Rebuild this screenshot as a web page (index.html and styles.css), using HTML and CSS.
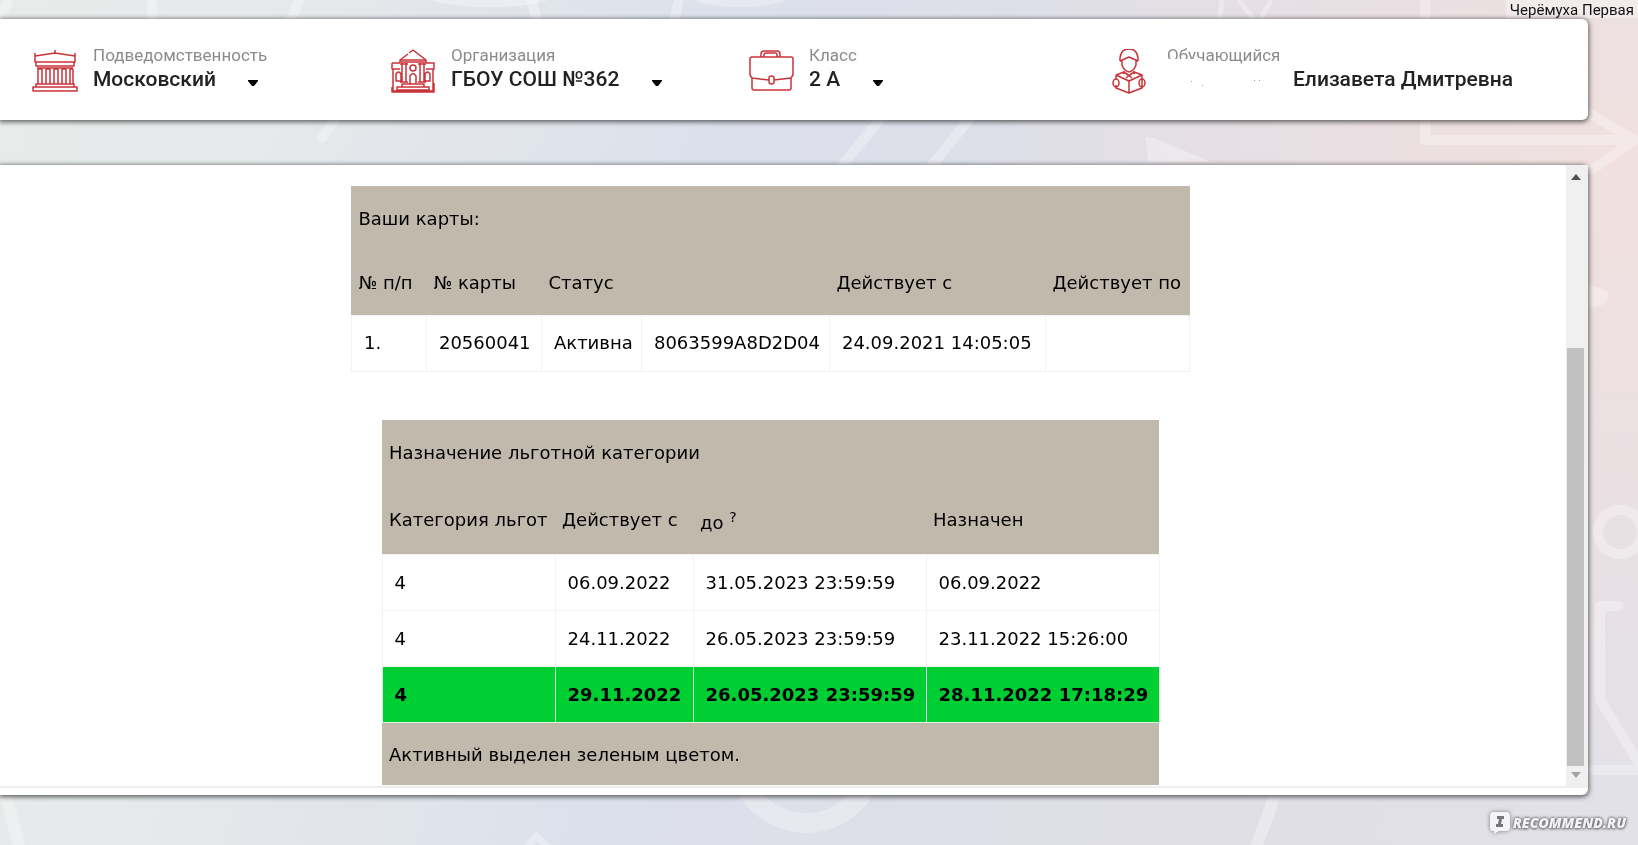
FILE: index.html
```html
<!DOCTYPE html>
<html lang="ru">
<head>
<meta charset="utf-8">
<meta name="viewport" content="width=device-width, initial-scale=1">
<title>Льготные категории</title>
<link rel="stylesheet" href="styles.css">
</head>
<body>
<svg class="backdrop" viewBox="0 0 1638 845" preserveAspectRatio="xMidYMid slice" aria-hidden="true">
  <g fill="none" stroke="#fff" stroke-opacity=".3" stroke-width="10" stroke-linecap="round" stroke-linejoin="round">
    <path d="M-4 20 8 4M152-5V30M286 30 302-5M322 138 350 100M530-5 540 30M672 30 680-5M840 168 886 112M930 168 975 112"/>
    <path d="M1425-5V140H1632M1592 115 1634 140 1592 170"/>
    <path d="M1218 30 1222 0M1240 2 1258 24 1270 2" stroke-width="5"/>
    <circle cx="1620" cy="532" r="22"/>
    <path d="M1618 606H1600V700L1640 765M1590 770H1640"/>
    <path d="M6 795 20 850M1255 850 1275 795" stroke-width="12"/>
    <path d="M524 850 536 836 552 850" stroke-width="7"/>
    <circle cx="806" cy="755" r="68" stroke-width="20"/>
  </g>
  <g fill="#fff" fill-opacity=".3">
    <ellipse cx="490" cy="-4" rx="62" ry="11"/>
    <ellipse cx="740" cy="-4" rx="50" ry="11"/>
    <path d="M1146 142Q1142 136 1154 138L1212 162H1148Z"/>
    <path d="M1586 285C1602 288 1612 290 1608 300 1604 306 1594 308 1586 308Z"/>
  </g>
</svg>

<div class="page">
  <div class="topline"><span class="author">Черёмуха Первая</span></div>

  <header class="filters">
    <div class="filter">
      <svg class="filter-icon" viewBox="0 0 46 46" aria-hidden="true">
        <path d="M3 13V7L23 4 43 7V13ZM23 4V1M3 7V4M43 7V4M4 13H42V17H4ZM6 17H40M5 19H41M6 20V35M10 20V35M14 20V35M18 20V35M22 20V35M26 20V35M30 20V35M34 20V35M38 20V35M41 20V35M6 20H10M14 20H18M22 20H26M30 20H34M38 20H41M4 35H42V38H4ZM1 38H45V42H1ZM8 38H11"/>
      </svg>
      <div class="filter-text">
        <label class="filter-label" for="district">Подведомственность</label>
        <div class="filter-row">
          <select class="filter-value" id="district"><option>Московский</option></select>
          <svg class="caret" viewBox="0 0 10 6" aria-hidden="true"><path d="M0 0H10V1L6 6H4L0 1Z"/></svg>
        </div>
      </div>
    </div>

    <div class="filter">
      <svg class="filter-icon" viewBox="0 0 46 46" aria-hidden="true">
        <path d="M10 11 18 5M19 4 23 1 36 11V13H10V11H36M2 14H10M36 14H44V20H36M2 14V20H10M3 20V42M43 20V42M2 42V38M44 34V42M12 14V33M16 14V33M30 14V33M34 14V33M10 15H18M28 15H36M10 33H18M28 33H36M20 35V27Q23 22 26 27V35M6 32V25Q8.500 21 11 25V32ZM35 32V25Q37.500 21 40 25V32ZM12 35H34V38H12ZM7 38H39V41H7ZM2 42H44V43H2Z"/>
        <circle cx="23" cy="19" r="3"/>
      </svg>
      <div class="filter-text">
        <label class="filter-label" for="school">Организация</label>
        <div class="filter-row">
          <select class="filter-value" id="school"><option>ГБОУ СОШ №362</option></select>
          <svg class="caret" viewBox="0 0 10 6" aria-hidden="true"><path d="M0 0H10V1L6 6H4L0 1Z"/></svg>
        </div>
      </div>
    </div>

    <div class="filter">
      <svg class="filter-icon" viewBox="0 0 46 46" aria-hidden="true">
        <path d="M3 8H43Q45 8 45 10V26L43 29 26 31M21 31 4 29 2 26V10Q2 8 4 8M4 29V39Q4 41 6 41H41Q43 41 43 39V29M13 8V5Q13 2 16 2H29Q32 2 32 5V8M16 8V6Q16 4 18 4H27Q29 4 29 6V8M21 29Q21 27 23.500 27T26 29V33Q26 35 23.500 35T21 33Z"/>
      </svg>
      <div class="filter-text">
        <label class="filter-label" for="grade">Класс</label>
        <div class="filter-row">
          <select class="filter-value" id="grade"><option>2 А</option></select>
          <svg class="caret" viewBox="0 0 10 6" aria-hidden="true"><path d="M0 0H10V1L6 6H4L0 1Z"/></svg>
        </div>
      </div>
    </div>

    <div class="filter">
      <svg class="filter-icon" viewBox="0 0 46 46" aria-hidden="true">
        <path d="M14 12V9Q15 0 23 0T32 9V12M14 12 23 8 32 12M16 12V16Q18 22 23 23 28 22 30 16V12M14 12H16M30 12H32M18 22V25M28 22V25M18 23 23 27 28 23M20 29 26 24M20 24 26 29M10 26 23 32 36 26V39L23 44 10 39V36M36 36V30M23 32V44M10 26 18 23M36 26 28 23M10 26V30"/>
        <ellipse cx="10" cy="34" rx="3" ry="4"/>
        <ellipse cx="36" cy="34" rx="3" ry="4"/>
      </svg>
      <div class="filter-text">
        <span class="filter-label filter-label-masked">Обучающийся</span>
        <div class="filter-row">
          <svg class="erased" viewBox="0 0 126 24" aria-hidden="true"><path d="M24 14h1v1h-1zM35 18h1v1h-1zM87 13h1v1h-1zM92 13h1v1h-1z"/></svg>
          <span class="filter-value">Елизавета Дмитревна</span>
        </div>
      </div>
    </div>
  </header>

  <main class="panel">
    <div class="panel-body">
      <div class="content">
        <table class="grid cards">
          <colgroup><col class="w-75"><col class="w-115"><col class="w-100"><col class="w-188"><col class="w-216"><col class="w-144"></colgroup>
          <thead>
            <tr><th colspan="6">Ваши карты:</th></tr>
            <tr><th>№ п/п</th><th>№ карты</th><th colspan="2">Статус</th><th>Действует с</th><th>Действует по</th></tr>
          </thead>
          <tbody>
            <tr><td>1.</td><td>20560041</td><td>Активна</td><td>8063599A8D2D04</td><td>24.09.2021 14:05:05</td><td></td></tr>
          </tbody>
        </table>

        <table class="grid benefits">
          <colgroup><col class="w-173"><col class="w-138"><col class="w-233"><col class="w-233"></colgroup>
          <thead>
            <tr><th colspan="4">Назначение льготной категории</th></tr>
            <tr><th>Категория льгот</th><th>Действует с</th><th>до <sup>?</sup></th><th>Назначен</th></tr>
          </thead>
          <tbody>
            <tr><td>4</td><td>06.09.2022</td><td>31.05.2023 23:59:59</td><td>06.09.2022</td></tr>
            <tr><td>4</td><td>24.11.2022</td><td>26.05.2023 23:59:59</td><td>23.11.2022 15:26:00</td></tr>
            <tr class="active"><td>4</td><td>29.11.2022</td><td>26.05.2023 23:59:59</td><td>28.11.2022 17:18:29</td></tr>
          </tbody>
          <tfoot>
            <tr><th colspan="4">Активный выделен зеленым цветом.</th></tr>
          </tfoot>
        </table>
      </div>
      <div class="scrollbar" aria-hidden="true">
        <svg class="arrow" viewBox="0 0 10 6"><path d="M5 0 10 6H0Z"/></svg>
        <div class="track"><div class="thumb"></div></div>
        <svg class="arrow arrow-off" viewBox="0 0 10 6"><path d="M0 0H10L5 6Z"/></svg>
      </div>
    </div>
  </main>

  <footer class="footer">
    <div class="brand">
      <svg class="brand-mark" viewBox="0 0 22 24" aria-hidden="true">
        <path class="bubble" d="M4 1H17Q21 1 21 5V16Q21 20 17 20H10L5 23V20H4Q1 20 1 16V5Q1 1 4 1Z"/>
        <path class="bar" d="M8 5H15V8H13L12 13H14V16H7V13H9L10 8H8Z"/>
      </svg>
      <span>RECOMMEND.RU</span>
    </div>
  </footer>
</div>
</body>
</html>
```
FILE: styles.css
```css
* {
  box-sizing: border-box;
}

body {
  margin: 0;
  overflow: hidden;
  font-family: Roboto, "Liberation Sans", sans-serif;
  color: #111;
  background:
    radial-gradient(ellipse 40% 75% at 100% 22%, #f1e0df 0%, rgba(241, 224, 223, 0) 100%),
    linear-gradient(100deg, #e8ebea 0%, #e6eaeb 15%, #dce0eb 42%, #e0dfe6 75%, #e2e1e8 100%);
}

.backdrop {
  position: fixed;
  inset: 0;
  z-index: -1;
  width: 100%;
  height: 100%;
}

.page {
  display: flex;
  flex-direction: column;
  min-height: 100vh;
}

.topline {
  display: flex;
  justify-content: flex-end;
  height: 19px;
}

.author {
  height: 18px;
  padding: 0 4px;
  font-size: 15px;
  line-height: 20px;
  background: rgba(255, 255, 255, .35);
}

/* Filter bar */
.filters {
  display: grid;
  grid-template-columns: repeat(4, minmax(0, 1fr));
  align-items: center;
  height: 101px;
  margin-right: 50px;
  padding: 0 124px 0 32px;
  background: #fff;
  border-radius: 0 6px 6px 0;
  box-shadow: 0 1px 5px 1px rgba(0, 0, 0, .6);
}

.filter {
  display: flex;
  align-items: flex-end;
  gap: 15px;
}

.filter-icon {
  flex: none;
  width: 46px;
  height: 46px;
  fill: none;
  stroke: #c93238;
  stroke-width: 1.5;
  stroke-linejoin: round;
}

.filter-text {
  display: flex;
  flex-direction: column;
  padding-bottom: 2px;
  white-space: nowrap;
}

.filter-label {
  font-size: 17px;
  line-height: 20px;
  color: #8c8c8c;
}

.filter-label-masked {
  position: relative;
}

.filter-label-masked::after {
  content: "";
  position: absolute;
  left: 0;
  bottom: 0;
  width: 30px;
  height: 6px;
  background: #fff;
}

.filter-row {
  display: flex;
  align-items: center;
}

.filter-value {
  margin: 0;
  padding: 0;
  border: 0;
  appearance: none;
  background: none;
  font-family: inherit;
  font-size: 21px;
  font-weight: 500;
  line-height: 28px;
  color: #222;
}

.caret {
  width: 10px;
  height: 6px;
  margin: 8px 0 0 32px;
}

.erased {
  width: 126px;
  height: 24px;
  fill: #999;
}

/* Main panel */
.panel {
  flex: 1;
  display: flex;
  flex-direction: column;
  margin: 45px 50px 0 0;
  padding-bottom: 7px;
  background: #fff;
  border-radius: 0 6px 6px 0;
  box-shadow: 0 1px 5px 1px rgba(0, 0, 0, .6);
}

.panel-body {
  flex: 1;
  display: flex;
  border-bottom: 2px solid #eee;
}

.content {
  flex: 1;
  display: flex;
  flex-direction: column;
  align-items: center;
  gap: 48px;
  padding: 21px 25px 0 0;
}

.grid {
  table-layout: fixed;
  border-collapse: collapse;
  font-family: "DejaVu Sans", sans-serif;
  font-size: 18px;
  line-height: 24px;
  color: #000;
  white-space: nowrap;
}

.cards { width: 838px; }
.benefits { width: 777px; }

.w-75 { width: 75px; }
.w-115 { width: 115px; }
.w-100 { width: 100px; }
.w-188 { width: 188px; }
.w-216 { width: 216px; }
.w-144 { width: 144px; }
.w-173 { width: 173px; }
.w-138 { width: 138px; }
.w-233 { width: 233px; }

.grid th {
  height: 64px;
  padding: 2px 7px 0;
  font-weight: 400;
  text-align: left;
  background: #c2b9ad;
}

.cards thead tr + tr th {
  height: 65px;
}

.benefits thead tr + tr th {
  height: 71px;
}

.grid sup {
  font-size: 14px;
  line-height: 24px;
}

.grid td {
  height: 56px;
  padding: 0 12px;
  border: 1px solid #f3f3f3;
}

.grid .active td {
  font-weight: 700;
  background: #00cf33;
  border-color: #d5f5dc;
}

.grid tfoot th {
  height: 62px;
}

.scrollbar {
  display: flex;
  flex-direction: column;
  align-items: center;
  width: 22px;
  padding: 9px 4px 8px 1px;
  background: #f0f0f0;
}

.arrow {
  width: 10px;
  height: 6px;
  fill: #505050;
}

.arrow-off {
  fill: #a3a3a3;
}

.track {
  flex: 1;
  display: flex;
  flex-direction: column;
  justify-content: flex-end;
  align-self: stretch;
  padding: 6px 0;
}

.thumb {
  height: 72%;
  background: #c1c1c1;
}

/* Footer mark */
.footer {
  display: flex;
  justify-content: flex-end;
  align-items: center;
  height: 50px;
  padding: 6px 12px 0 0;
}

.brand {
  display: flex;
  align-items: center;
  gap: 2px;
  font-family: "Open Sans", "Noto Sans", sans-serif;
  font-size: 14px;
  font-weight: 800;
  font-style: italic;
  line-height: 20px;
  color: #f4f3f8;
  text-shadow: 0 0 3px #666, 0 0 3px #777, 0 1px 3px #888;
}

.brand-mark {
  width: 22px;
  height: 24px;
  filter: drop-shadow(0 0 2px #777);
}

.bubble { fill: #f4f3f8; }
.bar { fill: #75757c; }
```
